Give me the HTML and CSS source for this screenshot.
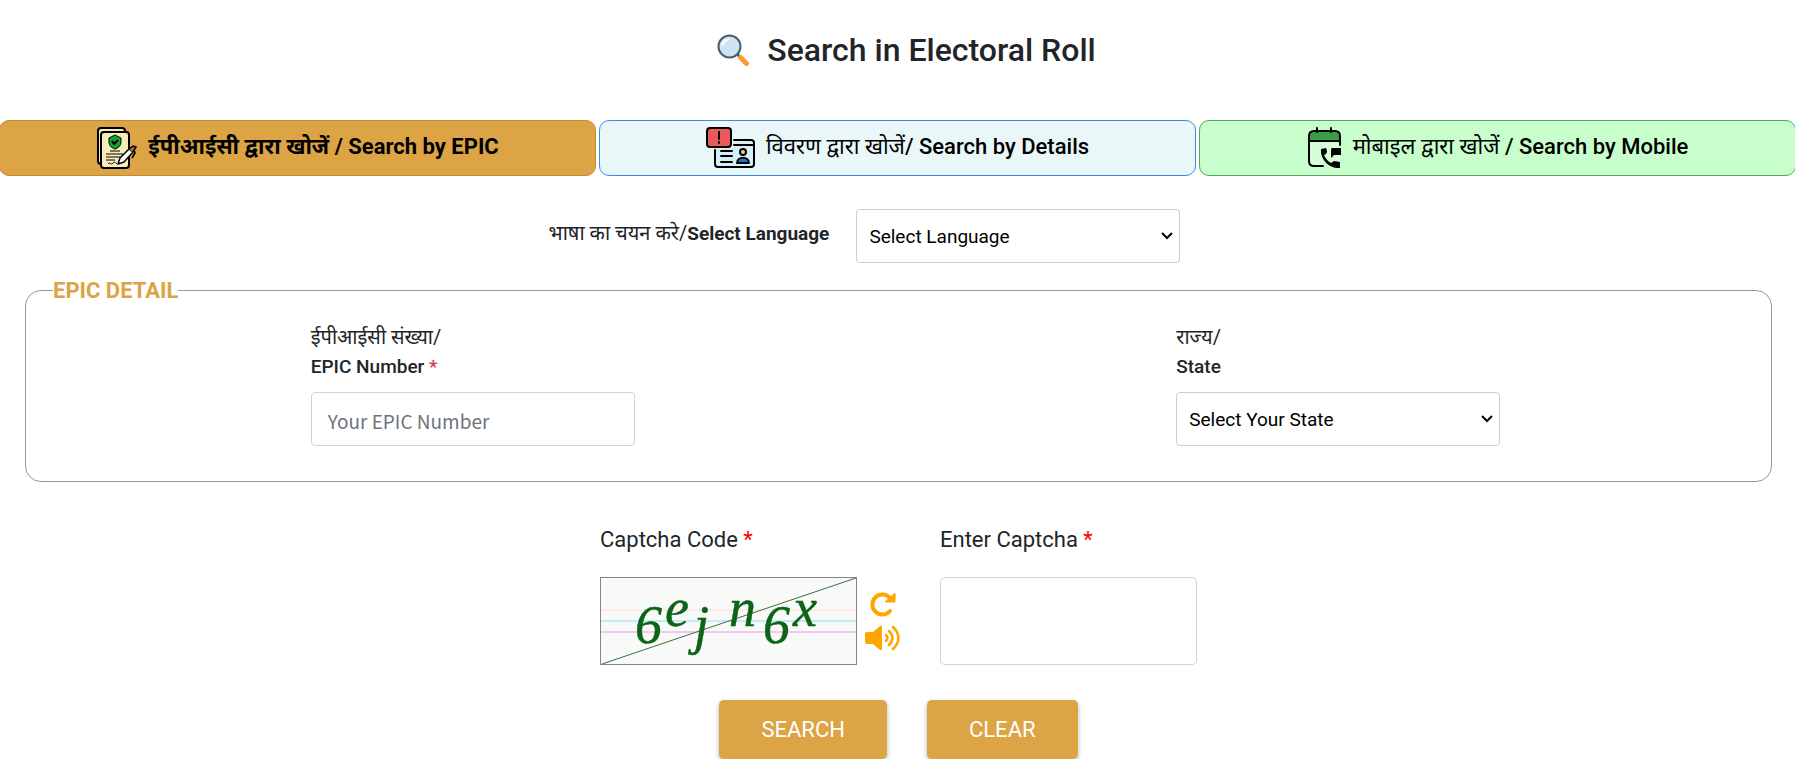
FILE: index.html
```html
<!DOCTYPE html>
<html lang="en">
<head>
    <meta charset="UTF-8">
    <meta name="viewport" content="width=device-width, initial-scale=1.0">
    <title>Search in Electoral Roll</title>
    <link rel="stylesheet" href="styles.css">
</head>
<body>
    <header class="page-title">
        <svg class="title-icon" viewBox="0 0 32 32" aria-hidden="true">
            <path d="M20 20l4 4" stroke="#455a64" stroke-width="3"/>
            <path d="M23.500 23.500l6 6" stroke="#ff9a30" stroke-width="5" stroke-linecap="round"/>
            <circle cx="12.500" cy="12.500" r="11" fill="#cfe4f3" stroke="#4a5f6e" stroke-width="2"/>
            <path d="M5.500 11a7.500 7.500 0 0 1 6-5.500" fill="none" stroke="#fff" stroke-width="2" stroke-linecap="round"/>
        </svg>
        <h1>Search in Electoral Roll</h1>
    </header>

    <nav class="tabs">
        <button type="button" class="tab tab-epic">
            <svg width="42" height="42" viewBox="0 0 42 42" aria-hidden="true">
                <g stroke="#000" stroke-width="2" stroke-linejoin="round">
                    <rect x="2" y="1" width="27" height="36" rx="3" fill="#f7edbb"/>
                    <rect x="5" y="5" width="28" height="36" rx="3" fill="#f7edbb"/>
                    <path d="M19 8l6 3v4c0 4-3 6-6 7-3-1-6-3-6-7v-4z" fill="#16a32b" stroke-width="1"/>
                    <path d="M16 14l2 3 4-4" fill="none"/>
                    <path d="M14 24h10M10 27h17M10 30h14M10 33h9M12 37c2-3 3 2 5-1s3 2 4 0" fill="none" stroke-width="1"/>
                    <path d="M22 37l2-6 9-9 4 3-9 10z" fill="#fff" stroke-width="1.500"/>
                    <path d="M33 22l4-3 3 1-3 5M38 22l1 4-3 5" fill="#b5682c" stroke-width="1.500"/>
                </g>
            </svg>
            <span class="tab-text">ईपीआईसी द्वारा खोजें / Search by EPIC</span>
        </button>
        <button type="button" class="tab tab-details">
            <svg width="50" height="42" viewBox="0 0 50 42" aria-hidden="true">
                <g stroke="#000" stroke-width="2" stroke-linejoin="round" stroke-linecap="round">
                    <path d="M9 23v14q0 3 3 3h33q3 0 3-3V16q0-3-3-3H28v8H9z" fill="#d4f0f6" stroke="none"/>
                    <path d="M28 13h17q3 0 3 3v21q0 3-3 3H12q-3 0-3-3V23M28 18h20M15 24h11M15 29h11M15 35h11" fill="none"/>
                    <rect x="1" y="1" width="24" height="19" rx="3" fill="#ea5a5a"/>
                    <path d="M13 5v7M13 15v1" fill="none"/>
                    <circle cx="37" cy="25" r="3" fill="#f2cf9b"/>
                    <path d="M31 36c0-7 12-7 12 0z" fill="#2a6fd0"/>
                </g>
            </svg>
            <span class="tab-text"><span class="hindi">विवरण द्वारा खोजें</span>/ Search by Details</span>
        </button>
        <button type="button" class="tab tab-mobile">
            <svg width="36" height="42" viewBox="0 0 36 42" aria-hidden="true">
                <path d="M2 14h31v20l-10 4H2z" fill="#d6ffd9"/>
                <path d="M2 14V9q0-5 5-5h21q5 0 5 5v5z" fill="#3c9b45"/>
                <path d="M16 39H7q-5 0-5-5V9q0-5 5-5h21q5 0 5 5v9M2 14h31M10 1v4M24 1v4" fill="none" stroke="#000" stroke-width="2" stroke-linecap="round"/>
                <path d="M25 21h9v7h-7l-3 3v-9z"/>
                <path d="M14 22l5-1q2 4 0 6l-2 1q2 5 7 8l3-2 6 1v6C23 42 13 33 14 22z"/>
            </svg>
            <span class="tab-text"><span class="hindi">मोबाइल द्वारा खोजें</span> / Search by Mobile</span>
        </button>
    </nav>

    <form class="search-form">
        <div class="language-row">
            <label for="language">भाषा का चयन करे/<b>Select Language</b></label>
            <select id="language" class="field">
                <option>Select Language</option>
            </select>
        </div>

        <fieldset class="epic-detail">
            <legend>EPIC DETAIL</legend>
            <div class="detail-grid">
                <div class="detail-item">
                    <label for="epic-number">ईपीआईसी संख्या/<br><span class="english">EPIC Number <span class="required">*</span></span></label>
                    <input type="text" id="epic-number" class="field" placeholder="Your EPIC Number">
                </div>
                <div class="detail-item">
                    <label for="state">राज्य/<br><span class="english">State</span></label>
                    <select id="state" class="field">
                        <option>Select Your State</option>
                    </select>
                </div>
            </div>
        </fieldset>

        <div class="captcha-row">
            <div class="captcha-group">
                <p class="captcha-label">Captcha Code <span class="star">*</span></p>
                <div class="captcha-line">
                    <svg class="captcha-image" viewBox="0 0 257 88" role="img" aria-label="Captcha">
                        <rect width="257" height="88" fill="#f8faf9"/>
                        <path d="M0 22h257M0 66h257" stroke="#fffbe9"/>
                        <path d="M0 33h257" stroke="#ffdccb"/>
                        <path d="M0 44h257" stroke="#93dbe6"/>
                        <path d="M0 55h257" stroke="#ee94e4"/>
                        <path d="M2 87L256 1" stroke="#3d6b43"/>
                        <g class="captcha-text">
                            <text x="35" y="66">6</text>
                            <text x="65" y="49">e</text>
                            <text x="94" y="66">j</text>
                            <text x="129" y="49">n</text>
                            <text x="163" y="66">6</text>
                            <text x="193" y="49">x</text>
                        </g>
                        <rect x="0" y="0" width="257" height="88" fill="none" stroke="#85857b" stroke-width="2"/>
                    </svg>
                    <div class="captcha-actions">
                        <button type="button" aria-label="Refresh captcha">
                            <svg width="36" height="26" viewBox="0 0 36 26" aria-hidden="true">
                                <path d="M25 20a10 10 0 1 1 0-13" fill="none" stroke="#ffa500" stroke-width="4" stroke-linecap="round"/>
                                <path d="M30 2v9H20z" fill="#ffa500" stroke="#ffa500" stroke-linejoin="round"/>
                            </svg>
                        </button>
                        <button type="button" aria-label="Play captcha audio">
                            <svg width="36" height="26" viewBox="0 0 36 26" aria-hidden="true">
                                <path d="M2 7h6l7-6q2-1 2 1v22q0 2-2 1l-7-6H2q-2 0-2-2V9q0-2 2-2z" fill="#ffa500"/>
                                <path d="M21 10q3 3 0 6M24 6q7 7 0 14M28 2q11 11 0 22" fill="none" stroke="#ffa500" stroke-width="2.500" stroke-linecap="round"/>
                            </svg>
                        </button>
                    </div>
                </div>
            </div>
            <div class="captcha-group">
                <label class="captcha-label" for="captcha">Enter Captcha <span class="star">*</span></label>
                <input type="text" id="captcha" class="captcha-input">
            </div>
        </div>

        <div class="actions">
            <button type="button" class="btn">SEARCH</button>
            <button type="reset" class="btn">CLEAR</button>
        </div>
    </form>
</body>
</html>
```
FILE: styles.css
```css
* {
    box-sizing: border-box;
}
body {
    margin: 0;
    background-color: #fff;
    color: #212529;
    font-family: Roboto, "Noto Sans", sans-serif;
    font-size: 20px;
    overflow-x: hidden;
}
button, input, select {
    font-family: inherit;
}
.page-title {
    display: flex;
    justify-content: center;
    align-items: center;
    gap: 18px;
    height: 100px;
    padding-left: 18px;
}
.title-icon {
    width: 32px;
    height: 32px;
}
h1 {
    margin: 0;
    font-size: 32px;
    font-weight: 500;
}
.tabs {
    display: grid;
    grid-template-columns: 1fr 1fr 1fr;
    gap: 3px;
    margin: 20px -1px 0;
}
.tab {
    display: flex;
    justify-content: center;
    align-items: center;
    gap: 10px;
    height: 56px;
    border-radius: 10px;
    font-size: 22px;
    font-weight: 500;
    color: #000;
}
.tab svg {
    flex: none;
}
.tab-text {
    padding-bottom: 6px;
}
.hindi {
    font-weight: 400;
}
.tab-epic {
    background-color: #dca444;
    border: 1px solid #c58a2b;
    font-weight: 700;
}
.tab-details {
    background-color: #eaf7f8;
    border: 1px solid #3b8be8;
}
.tab-mobile {
    background-color: #c8fecb;
    border: 1px solid #55a85b;
}
.language-row {
    display: flex;
    justify-content: center;
    gap: 27px;
    margin-top: 33px;
    padding-right: 66px;
}
.language-row label {
    padding-top: 10px;
}
.language-row b {
    font-size: 19px;
}
.field {
    width: 324px;
    height: 54px;
    padding: 0 12px;
    border: 1px solid #ccc;
    border-radius: 4px;
    background-color: #fff;
    color: #000;
    font-size: 19px;
}
select.field {
    appearance: none;
    background-image: url("data:image/svg+xml,%3Csvg xmlns='http://www.w3.org/2000/svg' width='12' height='8' viewBox='0 0 12 8'%3E%3Cpath d='M1 1l5 5 5-5' fill='none' stroke='%23000' stroke-width='2'/%3E%3C/svg%3E");
    background-repeat: no-repeat;
    background-position: right 6px center;
}
input.field {
    padding: 2px 16px 0;
    border-color: #ced4da;
    font-family: "Noto Sans CJK JP", sans-serif;
}
input.field::placeholder {
    color: #6c757d;
}
.epic-detail {
    margin: 15px 23px 0 25px;
    padding: 0 0 35px 14px;
    border: 1px solid #999;
    border-radius: 16px;
}
.epic-detail legend {
    margin-left: 13px;
    padding: 0;
    color: #dca444;
    font-size: 22px;
    font-weight: 700;
}
.detail-grid {
    display: grid;
    grid-template-columns: 1fr 1fr;
    padding-top: 20px;
}
.detail-item {
    display: flex;
    flex-direction: column;
    gap: 11px;
    width: 324px;
    margin: 0 auto;
    line-height: 29px;
}
.english {
    font-size: 19px;
    font-weight: 500;
}
.required {
    color: #dc3545;
}
.star {
    color: #f00;
}
.captcha-row {
    display: flex;
    justify-content: center;
    gap: 39px;
    margin-top: 44px;
    padding-left: 2px;
}
.captcha-group {
    display: flex;
    flex-direction: column;
    gap: 23px;
}
.captcha-label {
    margin: 0;
    font-size: 22px;
    line-height: 28px;
}
.captcha-line {
    display: flex;
    align-items: center;
    gap: 8px;
}
.captcha-image {
    width: 257px;
    height: 88px;
}
.captcha-text {
    fill: #0d6318;
    stroke: #0d6318;
    stroke-width: 0.5;
    font-family: "Liberation Serif", serif;
    font-size: 54px;
    font-style: italic;
}
.captcha-actions {
    display: flex;
    flex-direction: column;
    gap: 8px;
}
.captcha-actions button {
    display: flex;
    padding: 0;
    border: 0;
    background: none;
}
.captcha-input {
    width: 257px;
    height: 88px;
    padding: 0 16px;
    border: 1px solid #ced4da;
    border-radius: 5px;
    font-size: 20px;
}
.actions {
    display: flex;
    justify-content: center;
    gap: 40px;
    margin-top: 35px;
    padding-left: 2px;
}
.btn {
    height: 59px;
    padding: 0 42px;
    border: 0;
    border-radius: 5px;
    background-color: #dca444;
    box-shadow: 0 2px 5px rgba(0, 0, 0, 0.3);
    color: #fff;
    font-size: 22px;
}
```
